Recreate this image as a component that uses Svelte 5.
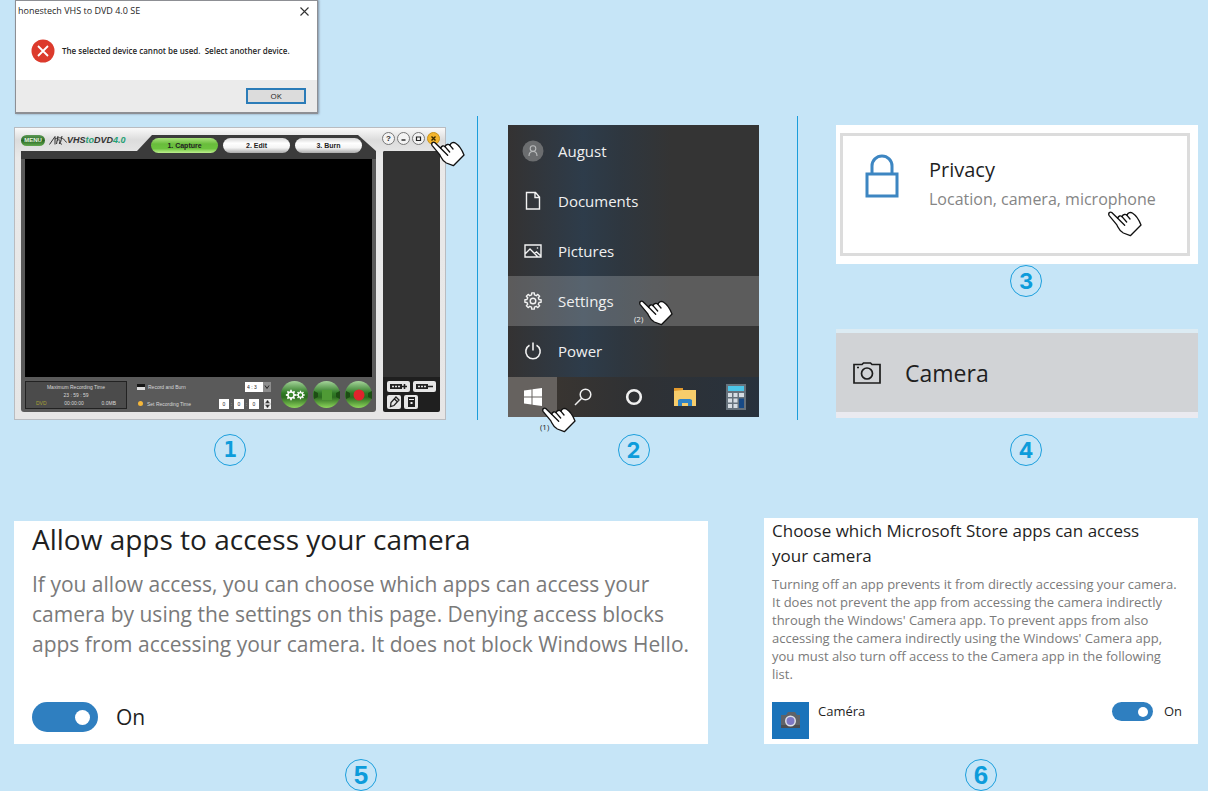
<script lang="ts">
  // ── Data ─────────────────────────────────────────────────────────────────────

  const tabs = ['1. Capture', '2. Edit', '3. Burn'];
  const menuItems = [
    { id: 'user', label: 'August' },
    { id: 'documents', label: 'Documents' },
    { id: 'pictures', label: 'Pictures' },
    { id: 'settings', label: 'Settings' },
    { id: 'power', label: 'Power' },
  ];

  let activeTab = $state(0);
  let allowApps = $state(true);
  let allowCamera = $state(true);
  let timeParts = $state(['0', '0', '0']);

  // ── Helpers ──────────────────────────────────────────────────────────────────

  function gearPath(cx: number, cy: number, outer: number, inner: number, teeth = 8): string {
    const step = (Math.PI * 2) / teeth;
    const pts: string[] = [];
    for (let i = 0; i < teeth; i++) {
      const a = i * step;
      for (const [off, r] of [[-0.3, inner], [-0.2, outer], [0.2, outer], [0.3, inner]]) {
        const t = a + off * step;
        pts.push(`${(cx + r * Math.cos(t)).toFixed(2)} ${(cy + r * Math.sin(t)).toFixed(2)}`);
      }
    }
    return `M${pts.join('L')}Z`;
  }
</script>

{#snippet hand()}
  <svg width="34" height="26" viewBox="0 0 102 78" fill="#fff" stroke="#111" stroke-width="4" stroke-linejoin="round" stroke-linecap="round" aria-hidden="true">
    <path d="M3 13C0 6 6 1 12 5L29 22C31 14 38 13 42 17C45 9 53 9 57 13C60 4 68 3 73 6C86 14 92 24 99 42L67 74L46 66C32 58 31 49 26 41Z" />
    <path d="M29 22L50 43M42 17L56 33M57 13L66 24" fill="none" />
  </svg>
{/snippet}

{#snippet menuIcon(id: string)}
  <svg width="22" height="22" viewBox="0 0 22 22" fill="none" stroke="#f2f2f2" stroke-width="1.4" aria-hidden="true">
    {#if id === 'user'}
      <circle cx="11" cy="11" r="10.5" fill="#6b6d6f" stroke="none" />
      <circle cx="11" cy="8.5" r="2.8" stroke="#b9bbbc" stroke-width="1.1" />
      <path d="M7 16c0-6 8-6 8 0" stroke="#b9bbbc" stroke-width="1.1" />
    {:else if id === 'documents'}
      <path d="M4.5 2.5h9l4 4.500v12h-13zM13 2.500v5h4.500" />
    {:else if id === 'pictures'}
      <path d="M3 5h16v12H3zM3 14l5-5 8 8M12.500 13.500l2-1.500 4.500 4" />
      <circle cx="15.500" cy="8" r=".8" fill="#f2f2f2" stroke="none" />
    {:else if id === 'settings'}
      <path d={gearPath(11, 11, 8.2, 6.2)} stroke-linejoin="round" />
      <circle cx="11" cy="11" r="2.800" />
    {:else}
      <path d="M7.500 5.300a7.200 7.200 0 1 0 7 0M11 2.500v8" stroke-width="1.600" />
    {/if}
  </svg>
{/snippet}

<main class="guide">
  <!-- ── Error dialog ── -->
  <section class="dialog" role="alertdialog" aria-labelledby="dialog-title" aria-describedby="dialog-text">
    <header class="dialog-head">
      <h2 id="dialog-title">honestech VHS to DVD 4.0 SE</h2>
      <button class="dialog-close" aria-label="Close">
        <svg width="9" height="9" viewBox="0 0 9 9" stroke="#333" stroke-width="1.1"><path d="M.5 .5l8 8M8.500 .5l-8 8" /></svg>
      </button>
    </header>
    <div class="dialog-body">
      <svg width="24" height="24" viewBox="0 0 24 24" aria-hidden="true">
        <circle cx="12" cy="12" r="11.500" fill="#dc3a2c" />
        <path d="M7 7l10 10M17 7L7 17" stroke="#fff" stroke-width="1.800" />
      </svg>
      <p id="dialog-text">The selected device cannot be used.&nbsp; Select another device.</p>
    </div>
    <footer class="dialog-foot"><button class="ok">OK</button></footer>
  </section>

  <!-- ── Steps 1 to 4 ── -->
  <div class="row row--top">
    <figure class="step step--recorder">
      <div class="recorder">
        <div class="rec-head">
          <button class="rec-menu">MENU</button>
          <div class="logo">
            <svg width="18" height="10" viewBox="0 0 18 10" fill="none" stroke="#333" stroke-width="1" aria-hidden="true">
              <path d="M.5 9.500L6 1.500v8M6 4c4-2 8-2 11.500 3.500M9 1L7.500 9M7.800 6c2-2 3.500-1.500 3 .5l-.5 2.500M13 1l-1.500 6.500c-.2 1.500.5 2 1.500 1.500" />
            </svg>
            <span>VHS</span><b>to</b><span>DVD</span><em>4.0</em>
          </div>
          <nav class="tabs">
            {#each tabs as tab, i (tab)}
              <button class="tab" class:tab--active={i === activeTab} onclick={() => (activeTab = i)}>{tab}</button>
            {/each}
          </nav>
          <div class="win-buttons">
            <button aria-label="Help">?</button>
            <button aria-label="Minimize"><svg width="7" height="7" viewBox="0 0 7 7"><path d="M1.500 5h4" stroke="#222" stroke-width="1.400" /></svg></button>
            <button aria-label="Maximize"><svg width="7" height="7" viewBox="0 0 7 7"><path d="M1.500 2h4v3.500h-4z" fill="none" stroke="#222" stroke-width="1.200" /></svg></button>
            <button class="win-close" aria-label="Close"><svg width="7" height="7" viewBox="0 0 7 7"><path d="M1.500 1.500l4 4M5.500 1.500l-4 4" stroke="#3a2a00" stroke-width="1.400" /></svg></button>
          </div>
        </div>
        <div class="rec-body">
          <div class="rec-main">
            <div class="screen"></div>
            <div class="controls">
              <div class="info">
                <span>Maximum Recording Time</span>
                <span>23 : 59 : 59</span>
                <div class="info-row"><span class="disc">DVD</span><span>00:00:00</span><span>0.0MB</span></div>
              </div>
              <div class="options">
                <div class="option">
                  <label><input class="tick" type="checkbox" />Record and Burn</label>
                  <div class="ratio">
                    <select aria-label="Aspect ratio"><option>4 : 3</option><option>16 : 9</option></select>
                    <svg width="8" height="10" viewBox="0 0 8 10" aria-hidden="true"><path d="M0 0h8v10H0z" fill="#8d8d8d" /><path d="M2 3.500l2 3 2-3" fill="none" stroke="#222" /></svg>
                  </div>
                </div>
                <div class="option">
                  <label><input class="dot" type="radio" checked />Set Recording Time</label>
                  <div class="time">
                    {#each timeParts as _, i}
                      {#if i > 0}<span>:</span>{/if}
                      <input type="text" aria-label="Time part {i + 1}" bind:value={timeParts[i]} />
                    {/each}
                    <button class="spin" aria-label="Change time"><svg width="7" height="10" viewBox="0 0 7 10"><path d="M0 0h7v10H0z" fill="#eee" /><path d="M1.500 4l2-3 2 3zM1.500 6l2 3 2-3zM0 5h7" fill="#222" stroke="#777" stroke-width=".5" /></svg></button>
                  </div>
                </div>
              </div>
              <div class="round-buttons">
                <button aria-label="Options">
                  <svg width="20" height="14" viewBox="0 0 20 14" fill="none" stroke="#fff">
                    <path d={gearPath(6, 7, 5.2, 3.8)} fill="#fff" stroke="none" /><circle cx="6" cy="7" r="2.300" fill="#3b8a2d" stroke="none" />
                    <path d={gearPath(15.5, 7, 4.2, 3)} fill="#fff" stroke="none" /><circle cx="15.500" cy="7" r="1.700" fill="#3b8a2d" stroke="none" />
                  </svg>
                </button>
                <button aria-label="Stop"><svg width="26" height="14" viewBox="0 0 26 14"><path d="M0 3l4 2v4l-4 2zM26 3l-4 2v4l4 2z" fill="#1d4d14" /><path d="M8 2h10v10H8z" fill="#4f9a35" /></svg></button>
                <button aria-label="Record"><svg width="26" height="14" viewBox="0 0 26 14"><path d="M0 3l4 2v4l-4 2zM26 3l-4 2v4l4 2z" fill="#1d4d14" /><circle cx="13" cy="7" r="5.500" fill="#e0242c" /></svg></button>
              </div>
            </div>
          </div>
          <div class="rec-side">
            <div class="clips"></div>
            <div class="clip-tools">
              <button class="wide" aria-label="Add clip"><svg width="19" height="7" viewBox="0 0 19 7"><path d="M1 1h12v5H1z" fill="#222" /><path d="M3 3.500h2M6 3.500h2M9 3.500h2" stroke="#ddd" stroke-width="1.500" /><path d="M13 3.500h5M15.500 1v5" stroke="#222" stroke-width="1.600" /></svg></button>
              <button class="wide" aria-label="Remove clip"><svg width="19" height="7" viewBox="0 0 19 7"><path d="M1 1h12v5H1z" fill="#222" /><path d="M3 3.500h2M6 3.500h2M9 3.500h2" stroke="#ddd" stroke-width="1.500" /><path d="M13 3.500h5" stroke="#222" stroke-width="1.600" /></svg></button>
              <button aria-label="Edit clip"><svg width="11" height="12" viewBox="0 0 11 12" fill="none" stroke="#222" stroke-width="1.300"><path d="M1.500 10.500l.5-4 5-5.500 3 3-5 5.500zM5.500 3l3 3" /></svg></button>
              <button aria-label="Delete clip"><svg width="9" height="12" viewBox="0 0 9 12"><path d="M1 1h7v10H1z" fill="#222" /><path d="M2 3.500h5" stroke="#eee" /><path d="M3.500 6h2v2h-2z" fill="#eee" /></svg></button>
            </div>
          </div>
        </div>
        <span class="pointer pointer--close">{@render hand()}</span>
      </div>
      <figcaption class="badge badge--slab">1</figcaption>
    </figure>

    <div class="divider"></div>

    <figure class="step step--start">
      <div class="start-menu">
        <div class="menu-list">
          {#each menuItems as item (item.id)}
            <button class="menu-item" class:menu-item--hover={item.id === 'settings'}>
              {@render menuIcon(item.id)}
              <span>{item.label}</span>
            </button>
          {/each}
        </div>
        <div class="taskbar">
          <button class="task task--active" aria-label="Start"><svg width="18" height="18" viewBox="0 0 18 18" fill="#fff"><path d="M0 2.500l7.500-1v7H0zM8.500 1.300L18 0v8.500H8.500zM0 9.500h7.500v7l-7.500-1zM8.500 9.500H18V18l-9.500-1.300z" /></svg></button>
          <button class="task" aria-label="Search"><svg width="18" height="18" viewBox="0 0 18 18" fill="none" stroke="#f0f0f0" stroke-width="1.500"><circle cx="11.500" cy="6.500" r="5.300" /><path d="M7.700 10.300L1 17" /></svg></button>
          <button class="task" aria-label="Cortana"><svg width="18" height="18" viewBox="0 0 18 18" fill="none" stroke="#f0f0f0" stroke-width="2.600"><circle cx="9" cy="9" r="6.800" /></svg></button>
          <button class="task" aria-label="File Explorer"><svg width="24" height="20" viewBox="0 0 24 20"><path d="M1 1h9v4H1z" fill="#e39a2d" /><path d="M1 4l9-1h13v16H1z" fill="#f7cd6b" /><path d="M5 19v-6l2-1h10l2 1v6h-4v-3H9v3z" fill="#2f83c5" /></svg></button>
          <button class="task" aria-label="Calculator"><svg width="20" height="26" viewBox="0 0 20 26"><path d="M0 0h20v26H0z" fill="#66727c" /><path d="M2 2h16v5H2z" fill="#4cc5e8" /><path d="M2 9h4v4H2zM7.500 9h4v4h-4zM13 9h5v4h-5zM2 14.500h4v4H2zM7.500 14.500h4v4h-4zM2 20h4v4H2zM7.500 20h4v4h-4z" fill="#d6dde3" /><path d="M13 14.500h5V24h-5z" fill="#174a86" /></svg></button>
        </div>
        <span class="pointer pointer--settings">{@render hand()}</span>
        <span class="note note--settings">(2)</span>
        <span class="pointer pointer--start">{@render hand()}</span>
        <span class="note note--start">(1)</span>
      </div>
      <figcaption class="badge">2</figcaption>
    </figure>

    <div class="divider"></div>

    <div class="stack">
      <figure class="step">
        <div class="privacy">
          <a class="privacy-link" href="#privacy">
            <svg width="34" height="44" viewBox="0 0 34 44" fill="none" stroke="#3d86c2" stroke-width="3" aria-hidden="true">
              <path d="M2 20h30v22H2zM7 20V12a10 10 0 0 1 20 0v8" />
            </svg>
            <span class="privacy-text">
              <strong>Privacy</strong>
              <small>Location, camera, microphone</small>
            </span>
          </a>
          <span class="pointer pointer--privacy">{@render hand()}</span>
        </div>
        <figcaption class="badge">3</figcaption>
      </figure>
      <figure class="step step--camera">
        <a class="camera-link" href="#camera">
          <svg width="28" height="22" viewBox="0 0 28 22" fill="none" stroke="#1c1c1c" stroke-width="1.700" aria-hidden="true">
            <path d="M1 2.500h8l1.500-1.500h7L19 2.500h8V21H1z" />
            <circle cx="14" cy="11.500" r="5.500" />
            <path d="M4 5.500h2" />
          </svg>
          <span>Camera</span>
        </a>
        <figcaption class="badge">4</figcaption>
      </figure>
    </div>
  </div>

  <!-- ── Steps 5 and 6 ── -->
  <div class="row row--bottom">
    <figure class="step">
      <section class="panel panel--large">
        <h2>Allow apps to access your camera</h2>
        <p>
          If you allow access, you can choose which apps can access your<br />
          camera by using the settings on this page. Denying access blocks<br />
          apps from accessing your camera. It does not block Windows Hello.
        </p>
        <label class="switch switch--large">
          <input type="checkbox" role="switch" bind:checked={allowApps} />
          {allowApps ? 'On' : 'Off'}
        </label>
      </section>
      <figcaption class="badge badge--plain">5</figcaption>
    </figure>

    <figure class="step">
      <section class="panel panel--small">
        <h2>Choose which Microsoft Store apps can access<br />your camera</h2>
        <p>
          Turning off an app prevents it from directly accessing your camera.<br />
          It does not prevent the app from accessing the camera indirectly<br />
          through the Windows' Camera app. To prevent apps from also<br />
          accessing the camera indirectly using the Windows' Camera app,<br />
          you must also turn off access to the Camera app in the following<br />
          list.
        </p>
        <div class="app-row">
          <svg width="37" height="37" viewBox="0 0 37 37" aria-hidden="true">
            <path d="M0 0h37v37H0z" fill="#1a73ba" />
            <path d="M9 13h5l2-3h7l2 3h3v13H9z" fill="#5f6368" />
            <path d="M9 23h19v3H9z" fill="#4b4e52" />
            <circle cx="18.500" cy="19" r="5.500" fill="#dfe2ea" />
            <circle cx="18.500" cy="19" r="4" fill="#7d78c4" />
          </svg>
          <span id="app-name">Caméra</span>
          <label class="switch">
            <input type="checkbox" role="switch" aria-describedby="app-name" bind:checked={allowCamera} />
            {allowCamera ? 'On' : 'Off'}
          </label>
        </div>
      </section>
      <figcaption class="badge badge--plain">6</figcaption>
    </figure>
  </div>
</main>

<style>
  :global(body) {
    margin: 0;
    background: #c6e5f7;
  }

  .guide {
    padding: 0 10px 0 14px;
    font-family: "Open Sans", "Noto Sans", sans-serif;
    color: #1f1f1f;
  }

  .guide * {
    box-sizing: border-box;
  }

  h2,
  p,
  figure {
    margin: 0;
  }

  h2 {
    font-weight: 400;
  }

  button,
  input,
  select {
    margin: 0;
    padding: 0;
    border: 0;
    background: none;
    color: inherit;
    font: inherit;
  }

  svg {
    display: block;
    flex-shrink: 0;
  }

  a {
    color: inherit;
    text-decoration: none;
  }

  /* ── Dialog ── */

  .dialog {
    width: 303px;
    margin-left: 1px;
    border: 1px solid #8d8f94;
    border-bottom-width: 2px;
    background: #fff;
    box-shadow: 1px 0 2px rgba(60, 60, 80, 0.5);
  }

  .dialog-head {
    display: flex;
    align-items: center;
    justify-content: space-between;
    height: 20px;
    padding: 0 8px 0 2px;
  }

  .dialog-head h2 {
    font-size: 9px;
    line-height: 20px;
  }

  .dialog-body {
    display: flex;
    align-items: center;
    gap: 7px;
    height: 59px;
    padding: 0 0 0 15px;
    font-size: 8px;
    font-weight: 600;
  }

  .dialog-foot {
    display: flex;
    justify-content: flex-end;
    height: 32px;
    padding: 8px 11px;
    background: #ebebeb;
  }

  .ok {
    width: 60px;
    border: 2px solid #2b7cb8;
    background: #dcdcdc;
    font-size: 8px;
    line-height: 12px;
  }

  /* ── Rows and steps ── */

  .row {
    display: grid;
  }

  .row--top {
    grid-template-columns: 463fr 1px 319fr 1px 400fr;
    margin-top: 2px;
  }

  .row--bottom {
    grid-template-columns: 694fr 434fr;
    gap: 56px;
    align-items: end;
    margin-top: 52px;
  }

  .step {
    display: flex;
    flex-direction: column;
    min-width: 0;
  }

  .step--recorder {
    gap: 14px;
    padding-top: 11px;
    margin-right: 31px;
  }

  .step--start {
    gap: 17px;
    padding-top: 9px;
    margin: 0 38px 0 30px;
  }

  .stack {
    display: flex;
    flex-direction: column;
    gap: 32px;
    margin-left: 38px;
    padding-top: 9px;
  }

  .stack .badge {
    margin-left: 18px;
  }

  .divider {
    margin-bottom: 46px;
    background: #1b9ddb;
  }

  .badge {
    align-self: center;
    width: 32px;
    height: 32px;
    border: 1px solid #1c9fdd;
    border-radius: 50%;
    color: #0d9cdb;
    font-family: Inter, sans-serif;
    font-size: 22px;
    font-weight: 700;
    line-height: 30px;
    text-align: center;
  }

  .badge--slab {
    font-family: "DejaVu Sans Mono", monospace;
  }

  .badge--plain {
    font-family: "Liberation Sans", sans-serif;
    font-size: 26px;
  }

  .pointer {
    position: absolute;
  }

  /* ── Recorder window ── */

  .recorder {
    position: relative;
    padding: 7px 5px 7px 6px;
    border: 1px solid #b9bcc0;
    background: linear-gradient(#fafafa, #dcdcdc 12px, #e9e9e9 30px, #e6e6e6);
    font-family: "Liberation Sans", sans-serif;
    font-size: 5px;
    line-height: 8px;
  }

  .rec-head {
    display: flex;
    height: 16px;
  }

  .rec-menu {
    width: 24px;
    height: 11px;
    border-radius: 6px;
    background: linear-gradient(#5c9a55, #2a6a24 50%, #63a84f);
    color: #e6f4e0;
    font: bold 6px/11px "Liberation Sans", sans-serif;
  }

  .logo {
    display: flex;
    flex: 1;
    height: 10px;
    margin-left: 4px;
    color: #333;
    font: italic bold 9px/10px "Liberation Sans", sans-serif;
  }

  .logo b {
    color: #25a074;
  }

  .logo em {
    color: #25a074;
  }

  .tabs {
    display: flex;
    gap: 5px;
    height: 24px;
    padding: 3px 14px 6px;
    background: #3b3b3b;
    clip-path: polygon(0 16px, 15px 0, calc(100% - 18px) 0, 100% 16px, 100% 100%, 0 100%);
  }

  .tab {
    width: 67px;
    height: 15px;
    border-radius: 8px;
    background: linear-gradient(#d5d5d5, #fff 35%, #f4f4f4 65%, #a9a9a9);
    color: #222;
    font: bold 7px/15px "Liberation Sans", sans-serif;
  }

  .tab--active {
    background: linear-gradient(#a9e27c, #69bd3c 40%, #6cc33e 70%, #bff08f);
  }

  .win-buttons {
    display: flex;
    gap: 2px;
    width: 64px;
    padding-left: 6px;
    margin-top: -3px;
  }

  .win-buttons button {
    display: grid;
    place-items: center;
    width: 13px;
    height: 13px;
    border: 1px solid #777;
    border-radius: 50%;
    background: #f3f3f3;
    font: bold 8px/11px "Liberation Sans", sans-serif;
  }

  .win-buttons .win-close {
    border-color: #c7921c;
    background: #f4b52c;
  }

  .rec-body {
    display: flex;
    gap: 7px;
  }

  .rec-main {
    flex: 1;
    padding: 8px 4px 0;
    border-radius: 0 0 3px 3px;
    background: linear-gradient(#3b3b3b, #3b3b3b 8px, #5a5a5a 8px);
  }

  .screen {
    height: 218px;
    background: #000;
  }

  .controls {
    display: flex;
    height: 35px;
    padding: 4px 0 3px;
    color: #d8d8d8;
  }

  .info {
    width: 102px;
    height: 28px;
    padding: 1px 10px;
    border: 1px solid #222;
    background: #4b4b4b;
    text-align: center;
  }

  .info > span {
    display: block;
  }

  .info-row {
    display: flex;
    justify-content: space-between;
  }

  .disc {
    color: #a8a035;
  }

  .options {
    flex: 1;
    margin: 0 10px;
  }

  .option {
    display: flex;
    align-items: center;
    justify-content: space-between;
    height: 11px;
  }

  .option + .option {
    margin-top: 6px;
  }

  .option label {
    display: flex;
    align-items: center;
    gap: 3px;
  }

  .tick {
    appearance: none;
    width: 8px;
    height: 6px;
    border-top: 3px solid #151515;
    background: #ddd;
  }

  .dot {
    appearance: none;
    width: 5px;
    height: 5px;
    margin: 0 1px;
    border-radius: 50%;
    background: #f5b73a;
  }

  .ratio,
  .time {
    display: flex;
    align-items: center;
  }

  .ratio select {
    appearance: none;
    width: 18px;
    height: 10px;
    padding-left: 2px;
    background: #fff;
    color: #222;
  }

  .time span {
    width: 5px;
    text-align: center;
  }

  .time input {
    width: 10px;
    height: 10px;
    background: #fff;
    color: #222;
    text-align: center;
  }

  .spin {
    margin-left: 5px;
  }

  .round-buttons {
    display: flex;
    gap: 5px;
  }

  .round-buttons button {
    display: grid;
    place-items: center;
    width: 27px;
    height: 27px;
    border-radius: 50%;
    background: linear-gradient(#a5d49a, #2f7a25 45%, #2c6c20 60%, #8ed75c);
  }

  .rec-side {
    display: flex;
    flex-direction: column;
    width: 57px;
    border-radius: 2px;
    background: #1f1f1f;
    overflow: hidden;
  }

  .clips {
    flex: 1;
    background: #333;
  }

  .clip-tools {
    display: flex;
    flex-wrap: wrap;
    gap: 3px;
    height: 35px;
    padding: 4px;
  }

  .clip-tools button {
    display: grid;
    place-items: center;
    width: 14px;
    height: 14px;
    border-radius: 2px;
    background: #e6e6e6;
  }

  .clip-tools .wide {
    width: 23px;
    height: 11px;
  }

  .pointer--close {
    top: 13px;
    right: -20px;
  }

  /* ── Start menu ── */

  .start-menu {
    position: relative;
    background:
      linear-gradient(90deg, rgba(52, 50, 50, 0.9), rgba(44, 62, 80, 0.8) 30%, rgba(44, 56, 68, 0.7) 45%, #343434 65%),
      #343434;
    color: #f0f0f0;
  }

  .menu-list {
    display: flex;
    flex-direction: column;
    padding: 1px 0;
  }

  .menu-item {
    display: flex;
    align-items: center;
    gap: 14px;
    height: 50px;
    padding-left: 14px;
    font-size: 15px;
  }

  .menu-item--hover {
    background: rgba(255, 255, 255, 0.2);
  }

  .taskbar {
    display: grid;
    grid-template-columns: 49fr 52fr 49fr 54fr 47fr;
    height: 40px;
    background: linear-gradient(90deg, #3f372f, #2f3134 50%, #28323d);
  }

  .task {
    display: grid;
    place-items: center;
  }

  .task--active {
    background: #66625f;
  }

  .pointer--settings {
    top: 175px;
    left: 131px;
  }

  .pointer--start {
    top: 282px;
    left: 34px;
  }

  .note {
    position: absolute;
    font-size: 8px;
    line-height: 10px;
  }

  .note--settings {
    top: 189px;
    left: 126px;
  }

  .note--start {
    top: 297px;
    left: 32px;
    color: #222;
  }

  /* ── Privacy and camera ── */

  .privacy {
    position: relative;
    padding: 8px 8px 8px 4px;
    margin-bottom: 1px;
    background: #fff;
  }

  .privacy-link {
    display: flex;
    gap: 30px;
    height: 123px;
    padding: 18px 22px;
    border: 3px solid #dcdcdc;
  }

  .privacy-text {
    display: flex;
    flex-direction: column;
    white-space: nowrap;
  }

  .privacy-text strong {
    font-size: 20px;
    font-weight: 400;
    line-height: 32px;
  }

  .privacy-text small {
    color: #858585;
    font-size: 16px;
    line-height: 26px;
  }

  .pointer--privacy {
    top: 86px;
    right: 56px;
  }

  .step--camera {
    gap: 16px;
  }

  .camera-link {
    display: flex;
    align-items: center;
    gap: 24px;
    height: 89px;
    padding-left: 17px;
    border-top: 4px solid #dcebf3;
    border-bottom: 6px solid #eaeaf0;
    background: #d1d3d6;
    font-size: 23px;
  }

  /* ── Settings panels ── */

  .panel {
    margin-bottom: 15px;
    background: #fff;
    white-space: nowrap;
  }

  .panel p {
    color: #7a7a7a;
  }

  .panel--large {
    height: 223px;
    padding: 0 12px 0 18px;
  }

  .panel--large h2 {
    font-size: 28px;
    line-height: 36px;
  }

  .panel--large p {
    margin: 12px 0 43px;
    font-size: 21px;
    line-height: 30px;
  }

  .panel--small {
    height: 226px;
    padding: 0 16px 0 8px;
  }

  .panel--small h2 {
    font-size: 17px;
    line-height: 25px;
  }

  .panel--small p {
    margin: 7px 0 19px;
    font-size: 13px;
    line-height: 18px;
  }

  .switch {
    display: flex;
    align-items: center;
    gap: 11px;
    font-size: 13px;
    line-height: 19px;
  }

  .switch input {
    appearance: none;
    display: flex;
    align-items: center;
    width: 41px;
    height: 19px;
    padding: 0 5px;
    border-radius: 10px;
    background: #8a8a8a;
  }

  .switch input::before {
    content: "";
    width: 10px;
    height: 10px;
    border-radius: 50%;
    background: #fff;
  }

  .switch input:checked {
    justify-content: flex-end;
    background: #2f7fc0;
  }

  .switch--large {
    gap: 18px;
    font-size: 21px;
    line-height: 30px;
  }

  .switch--large input {
    width: 66px;
    height: 30px;
    padding: 0 8px;
    border-radius: 15px;
  }

  .switch--large input::before {
    width: 15px;
    height: 15px;
  }

  .app-row {
    display: flex;
    align-items: flex-start;
    gap: 9px;
    font-size: 13px;
    line-height: 19px;
  }

  .app-row .switch {
    margin-left: auto;
  }
</style>
